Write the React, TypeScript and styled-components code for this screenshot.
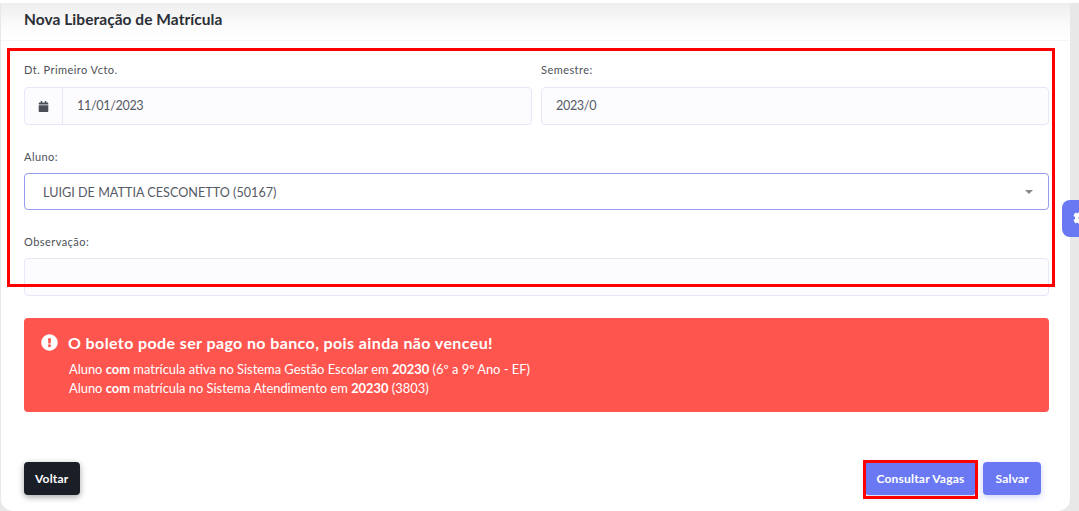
import React from "react";
import styled, { createGlobalStyle } from "styled-components";
import { FaCalendar, FaCog, FaExclamationCircle } from "react-icons/fa";

const GlobalStyle = createGlobalStyle`
  html, body {
    margin: 0;
    padding: 0;
    height: 511px;
    overflow: hidden;
    background: #e8e8e8;
    font-family: "Lato", "Liberation Sans", sans-serif;
  }
`;

const Page = styled.div`
  position: relative;
  width: 1079px;
  height: 511px;
  overflow: hidden;
  padding: 3px 9px 0 1px;
  box-sizing: border-box;
  background: linear-gradient(180deg, #ffffff 0 3px, #e8e8e8 3px);
`;

const Card = styled.div`
  height: 508px;
  background: #fff;
  border-radius: 4px 4px 12px 12px;
  display: flex;
  flex-direction: column;
`;

const CardHeader = styled.div`
  height: 40px;
  box-sizing: border-box;
  padding: 7px 23px 0;
  border-bottom: 1px solid #f5f5f7;
  background: linear-gradient(180deg, #eeeeee 0%, #fbfbfb 60%, #ffffff 100%);
`;

const Title = styled.h1`
  margin: 0;
  font-size: 15.5px;
  line-height: 18px;
  font-weight: 700;
  letter-spacing: 0.05px;
  color: #2b2f36;
`;

const CardBody = styled.div`
  flex: 1;
  padding: 20px 21px 16px 23px;
  display: flex;
  flex-direction: column;
`;

const Row = styled.div`
  display: flex;
  gap: 9px;
  margin-bottom: 23px;
`;

const Field = styled.div<{ $half?: boolean }>`
  flex: ${(p) => (p.$half ? "1 1 0" : "1 1 100%")};
  min-width: 0;
`;

const Label = styled.div<{ $gap?: number }>`
  height: 18px;
  margin-bottom: ${(p) => p.$gap ?? 7}px;
  font-size: 11px;
  line-height: 18px;
  letter-spacing: 0.45px;
  color: #4d5157;
`;

const InputBox = styled.div<{ $focus?: boolean }>`
  height: ${(p) => (p.$focus ? 37 : 38)}px;
  box-sizing: border-box;
  display: flex;
  align-items: center;
  border: 1px solid ${(p) => (p.$focus ? "#959deb" : "#e6e8f7")};
  border-radius: 4px;
  background: ${(p) => (p.$focus ? "#ffffff" : "#fcfcff")};
  font-size: 12.6px;
  color: #555a64;
`;

const Addon = styled.div`
  width: 37px;
  height: 100%;
  flex: none;
  display: flex;
  align-items: center;
  justify-content: center;
  border-right: 1px solid #e6e8f7;
  color: #4a4e57;
  font-size: 11px;
`;

const Value = styled.span<{ $inset: number; $tight?: boolean }>`
  padding-left: ${(p) => p.$inset}px;
  flex: 1;
  margin-top: ${(p) => (p.$tight ? "-2px" : "1px")};
  letter-spacing: ${(p) => (p.$tight ? "-0.35px" : "0.02px")};
`;

const Caret = styled.span`
  width: 0;
  height: 0;
  margin-right: 15px;
  border-left: 4px solid transparent;
  border-right: 4px solid transparent;
  border-top: 4px solid #888888;
`;

const Alert = styled.div`
  height: 94px;
  box-sizing: border-box;
  margin-top: -1px;
  padding: 15px 17px;
  display: flex;
  gap: 10px;
  background: #ff554f;
  border-radius: 4px;
  color: #fff;
`;

const AlertIcon = styled.div`
  width: 18px;
  height: 18px;
  margin-top: 1px;
  font-size: 17px;
  line-height: 18px;
`;

const AlertTitle = styled.div`
  font-size: 16px;
  line-height: 20px;
  font-weight: 700;
  margin-bottom: 7px;
  margin-left: -1px;
  letter-spacing: 0.39px;
`;

const AlertLine = styled.div`
  font-size: 12.9px;
  line-height: 19px;

  b {
    font-weight: 700;
  }
`;

const Footer = styled.div`
  margin-top: 50px;
  display: flex;
  align-items: center;
  justify-content: space-between;
`;

const Actions = styled.div`
  display: flex;
  gap: 7px;
  margin-right: 8px;
`;

const Button = styled.button<{ $dark?: boolean }>`
  height: 33px;
  padding: 0 ${(p) => (p.$dark ? 11 : 12)}px;
  border: none;
  border-radius: 4px;
  font-family: inherit;
  font-size: 12px;
  font-weight: 700;
  letter-spacing: 0.2px;
  color: #fff;
  background: ${(p) => (p.$dark ? "#1a1e26" : "#6a79f3")};
  box-shadow: 0 2px 6px
    ${(p) => (p.$dark ? "rgba(26, 30, 38, 0.4)" : "rgba(106, 121, 243, 0.35)")};
`;

const RedFrame = styled.div`
  position: absolute;
  left: 7px;
  top: 48px;
  width: 1048px;
  height: 239px;
  box-sizing: border-box;
  border: 3px solid #ff0000;
  pointer-events: none;
`;

const RedButtonFrame = styled.div`
  position: absolute;
  left: 863px;
  top: 460px;
  width: 115px;
  height: 39px;
  box-sizing: border-box;
  border: 3px solid #ff0000;
  pointer-events: none;
`;

const SideTab = styled.div`
  position: absolute;
  left: 1062px;
  top: 200px;
  width: 30px;
  height: 37px;
  padding: 10px 0 0 11px;
  box-sizing: border-box;
  border-radius: 8px 0 0 8px;
  background: #6a79f3;
  color: #fff;
  font-size: 16px;
  line-height: 16px;
`;

export default function App() {
  return (
    <>
      <GlobalStyle />
      <Page>
        <Card>
          <CardHeader>
            <Title>Nova Liberação de Matrícula</Title>
          </CardHeader>
          <CardBody>
            <Row>
              <Field $half>
                <Label $gap={8}>Dt. Primeiro Vcto.</Label>
                <InputBox>
                  <Addon>
                    <FaCalendar />
                  </Addon>
                  <Value $inset={14} $tight>
                    11/01/2023
                  </Value>
                </InputBox>
              </Field>
              <Field $half>
                <Label $gap={8}>Semestre:</Label>
                <InputBox>
                  <Value $inset={14} $tight>
                    2023/0
                  </Value>
                </InputBox>
              </Field>
            </Row>
            <Row>
              <Field>
                <Label>Aluno:</Label>
                <InputBox $focus>
                  <Value $inset={18}>LUIGI DE MATTIA CESCONETTO (50167)</Value>
                  <Caret />
                </InputBox>
              </Field>
            </Row>
            <Row>
              <Field>
                <Label>Observação:</Label>
                <InputBox />
              </Field>
            </Row>
            <Alert>
              <AlertIcon>
                <FaExclamationCircle />
              </AlertIcon>
              <div>
                <AlertTitle>O boleto pode ser pago no banco, pois ainda não venceu!</AlertTitle>
                <AlertLine>
                  Aluno <b>com</b> matrícula ativa no Sistema Gestão Escolar em <b>20230</b> (6º a 9º Ano - EF)
                </AlertLine>
                <AlertLine>
                  Aluno <b>com</b> matrícula no Sistema Atendimento em <b>20230</b> (3803)
                </AlertLine>
              </div>
            </Alert>
            <Footer>
              <Button $dark>Voltar</Button>
              <Actions>
                <Button>Consultar Vagas</Button>
                <Button>Salvar</Button>
              </Actions>
            </Footer>
          </CardBody>
        </Card>
        <SideTab>
          <FaCog />
        </SideTab>
        <RedFrame />
        <RedButtonFrame />
      </Page>
    </>
  );
}
